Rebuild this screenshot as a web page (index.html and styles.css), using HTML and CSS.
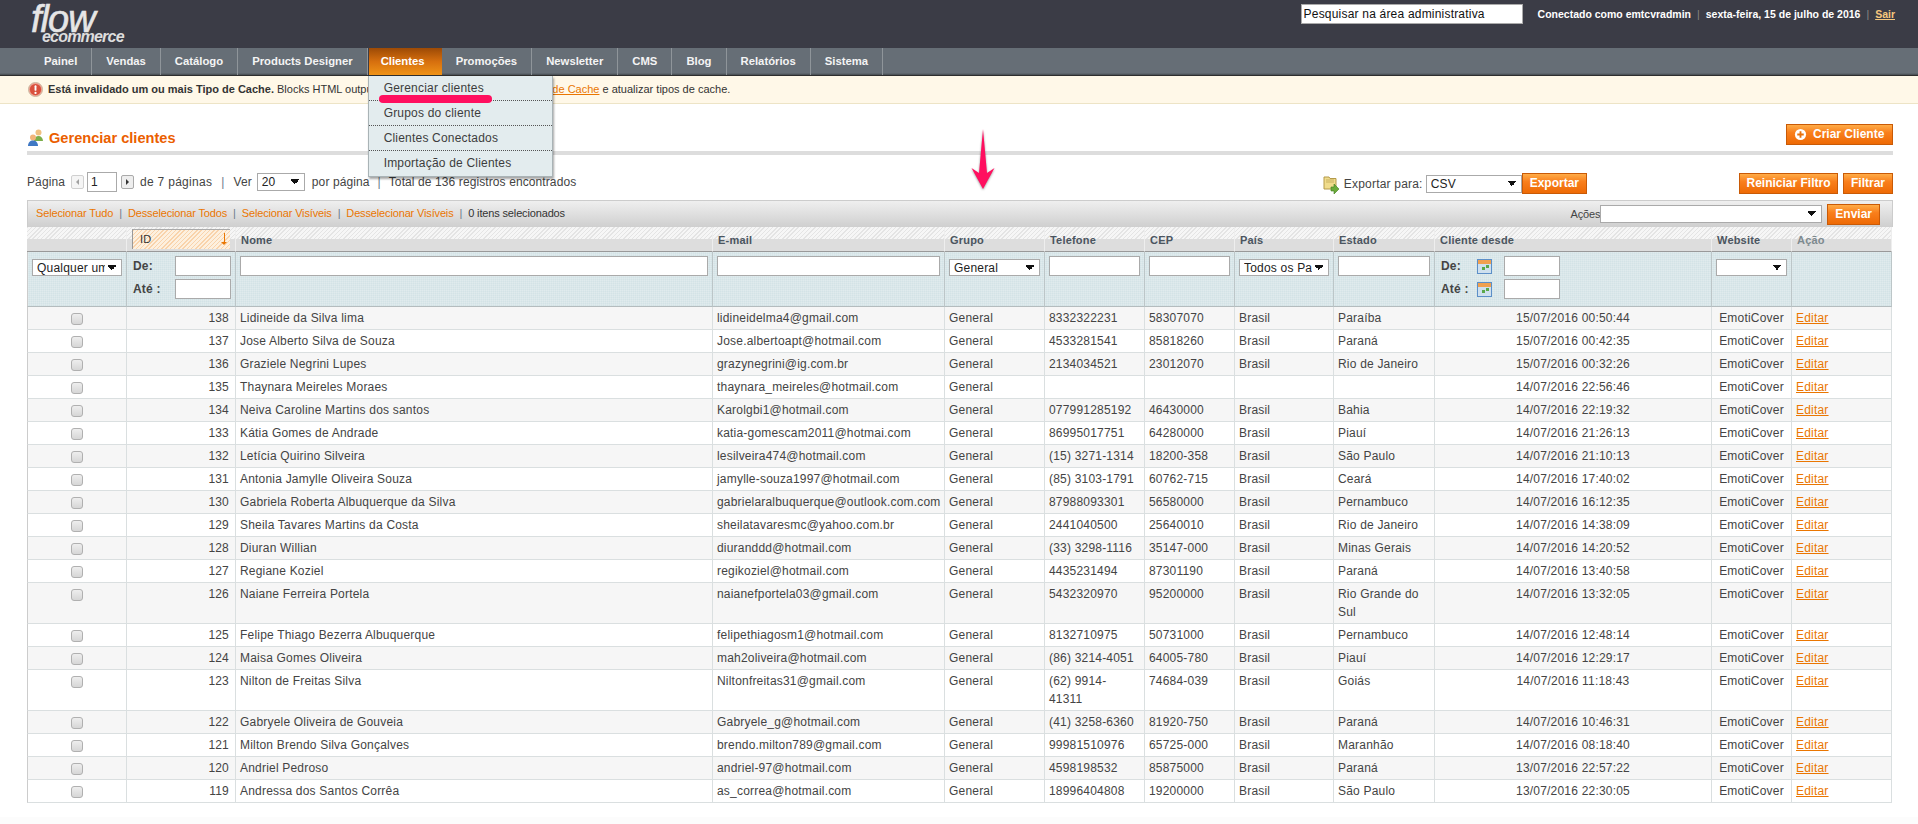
FILE: index.html
```html
<!DOCTYPE html>
<html lang="pt-BR">
<head>
<meta charset="utf-8">
<title>Gerenciar clientes</title>
<link rel="stylesheet" href="styles.css">
</head>
<body>
<header class="top">
  <div class="logo"><span class="logo-flow">flow</span><span class="logo-sub">ecommerce</span></div>
  <div class="top-right">
    <input class="search" type="text" value="Pesquisar na área administrativa">
    <div class="user"><b>Conectado como emtcvradmin</b><span class="sep">|</span><b>sexta-feira, 15 de julho de 2016</b><span class="sep">|</span><a href="#">Sair</a></div>
  </div>
</header>
<nav class="nav">
  <a class="nav-item" href="#">Painel</a>
  <a class="nav-item" href="#">Vendas</a>
  <a class="nav-item" href="#">Catálogo</a>
  <a class="nav-item" href="#">Products Designer</a>
  <div class="nav-wrap">
    <a class="nav-item active" href="#">Clientes</a>
    <div class="menu">
      <a href="#">Gerenciar clientes</a>
      <a href="#">Grupos do cliente</a>
      <a href="#">Clientes Conectados</a>
      <a href="#">Importação de Clientes</a>
    </div>
    <span class="mark-line"></span>
  </div>
  <a class="nav-item" href="#">Promoções</a>
  <a class="nav-item" href="#">Newsletter</a>
  <a class="nav-item" href="#">CMS</a>
  <a class="nav-item" href="#">Blog</a>
  <a class="nav-item" href="#">Relatórios</a>
  <a class="nav-item" href="#">Sistema</a>
</nav>
<div class="notice">
  <svg class="notice-icon" viewBox="0 0 16 16"><circle cx="8" cy="8" r="7.5" fill="#f0a090" stroke="#c9b9a0"/><circle cx="8" cy="8" r="6" fill="#d9503c"/><rect x="7" y="3.400" width="2" height="6" rx="1" fill="#fff"/><circle cx="8" cy="11.600" r="1.200" fill="#fff"/></svg>
  <p><b>Está invalidado um ou mais Tipo de Cache.</b> Blocks HTML output. Clique aqui para o <a href="#">Gerenciamento de Cache</a> e atualizar tipos de cache.</p>
</div>
<svg class="mark-arrow" viewBox="0 0 24 62"><path d="M12 0 L16 44 L23.500 39 L12 60 L.5 39 L8 44 Z" fill="#ff0f5f"/></svg>
<main class="content">
  <div class="head">
    <h1><svg class="title-icon" viewBox="0 0 18 18"><circle cx="11.500" cy="3.600" r="3" fill="#f0c080"/><path d="M7 12c0-3 2-5 4.500-5s4.500 2 4.500 5z" fill="#7cae4a"/><circle cx="6" cy="8.500" r="3" fill="#f2b47a"/><path d="M1 17c0-3.500 2.200-5.500 5-5.500s5 2 5 5.500z" fill="#3f78c4"/></svg>Gerenciar clientes</h1>
    <button class="btn btn-add" type="button"><svg class="plus" viewBox="0 0 14 14"><circle cx="7" cy="7" r="6" fill="#fff"/><path d="M6 3.500h2V6h2.500v2H8v2.500H6V8H3.500V6H6z" fill="#e8710c"/></svg>Criar Cliente</button>
  </div>
  <div class="pager-row">
    <div class="pager">
      <span>Página</span>
      <span class="arrow arrow-off"><i class="tri tri-l"></i></span>
      <input class="page-input" type="text" value="1">
      <span class="arrow arrow-next"><i class="tri tri-r"></i></span>
      <span class="pg-of">de 7 páginas</span><span class="bar">|</span><span>Ver</span>
      <select class="sel sel-page"><option>20</option></select>
      <span>por página</span><span class="bar">|</span><span>Total de 136 registros encontrados</span>
    </div>
    <div class="exports">
      <svg class="export-icon" viewBox="0 0 16 20"><path d="M1 3h5l1 1.500h6V15H1z" fill="#f0dc8c" stroke="#b49a4a"/><path d="M3 6h8M3 8h8" stroke="#c8b060"/><path d="M8 13h3v-3l5 5-5 5v-3H8z" fill="#6bab3a" stroke="#3f7d1e" stroke-width=".6"/></svg>
      <span class="export-label">Exportar para:</span>
      <select class="sel sel-export"><option>CSV</option></select>
      <button class="btn" type="button">Exportar</button>
      <button class="btn btn-reset" type="button">Reiniciar Filtro</button>
      <button class="btn" type="button">Filtrar</button>
    </div>
  </div>
  <div class="mass">
    <div class="mass-links">
      <a href="#">Selecionar Tudo</a><span class="bar">|</span><a href="#">Desselecionar Todos</a><span class="bar">|</span><a href="#">Selecionar Visíveis</a><span class="bar">|</span><a href="#">Desselecionar Visíveis</a><span class="bar">|</span><b>0 itens selecionados</b>
    </div>
    <div class="mass-actions">
      <span>Ações</span>
      <select class="sel sel-mass"><option></option></select>
      <button class="btn" type="button">Enviar</button>
    </div>
  </div>
  <table class="grid">
    <colgroup>
      <col class="c1"><col class="c2"><col class="c3"><col class="c4"><col class="c5"><col class="c6"><col class="c7"><col class="c8"><col class="c9"><col class="c10"><col class="c11"><col class="c12">
    </colgroup>
    <thead>
      <tr class="headings">
        <th></th><th class="sorted"><span class="sort-box">ID<i class="sort-arrow"></i></span></th><th>Nome</th><th>E-mail</th><th>Grupo</th><th>Telefone</th><th>CEP</th><th>País</th><th>Estado</th><th>Cliente desde</th><th>Website</th><th class="muted">Ação</th>
      </tr>
      <tr class="filter">
        <th><select class="sel fill"><option>Qualquer um</option></select></th>
        <th class="range"><div class="range-row"><label>De:</label><input class="small" type="text"></div><div class="range-row"><label>Até :</label><input class="small" type="text"></div></th>
        <th><input class="fill" type="text"></th>
        <th><input class="fill" type="text"></th>
        <th><select class="sel fill"><option>General</option></select></th>
        <th><input class="fill" type="text"></th>
        <th><input class="fill" type="text"></th>
        <th><select class="sel fill"><option>Todos os Países</option></select></th>
        <th><input class="fill" type="text"></th>
        <th class="range">
          <div class="range-row date"><label>De:</label><svg class="cal" viewBox="0 0 15 15"><rect x=".5" y=".5" width="14" height="14" fill="#cfe0ee" stroke="#5c8fc8"/><rect x="1" y="1" width="13" height="4" fill="#f0a050"/><rect x="5" y="8" width="3" height="3" fill="#5aa84a"/><rect x="9" y="6" width="3" height="3" fill="#5aa84a"/></svg><input class="small" type="text"></div>
          <div class="range-row date"><label>Até :</label><svg class="cal" viewBox="0 0 15 15"><rect x=".5" y=".5" width="14" height="14" fill="#cfe0ee" stroke="#5c8fc8"/><rect x="1" y="1" width="13" height="4" fill="#f0a050"/><rect x="5" y="8" width="3" height="3" fill="#5aa84a"/><rect x="9" y="6" width="3" height="3" fill="#5aa84a"/></svg><input class="small" type="text"></div>
        </th>
        <th><select class="sel fill"><option></option></select></th>
        <th></th>
      </tr>
    </thead>
    <tbody>
      <tr><td class="chk"><input type="checkbox"></td><td class="num">138</td><td>Lidineide da Silva lima</td><td>lidineidelma4@gmail.com</td><td>General</td><td>8332322231</td><td>58307070</td><td>Brasil</td><td>Paraíba</td><td class="ctr">15/07/2016 00:50:44</td><td class="ctr">EmotiCover</td><td><a href="#">Editar</a></td></tr>
      <tr><td class="chk"><input type="checkbox"></td><td class="num">137</td><td>Jose Alberto Silva de Souza</td><td>Jose.albertoapt@hotmail.com</td><td>General</td><td>4533281541</td><td>85818260</td><td>Brasil</td><td>Paraná</td><td class="ctr">15/07/2016 00:42:35</td><td class="ctr">EmotiCover</td><td><a href="#">Editar</a></td></tr>
      <tr><td class="chk"><input type="checkbox"></td><td class="num">136</td><td>Graziele Negrini Lupes</td><td>grazynegrini@ig.com.br</td><td>General</td><td>2134034521</td><td>23012070</td><td>Brasil</td><td>Rio de Janeiro</td><td class="ctr">15/07/2016 00:32:26</td><td class="ctr">EmotiCover</td><td><a href="#">Editar</a></td></tr>
      <tr><td class="chk"><input type="checkbox"></td><td class="num">135</td><td>Thaynara Meireles Moraes</td><td>thaynara_meireles@hotmail.com</td><td>General</td><td></td><td></td><td></td><td></td><td class="ctr">14/07/2016 22:56:46</td><td class="ctr">EmotiCover</td><td><a href="#">Editar</a></td></tr>
      <tr><td class="chk"><input type="checkbox"></td><td class="num">134</td><td>Neiva Caroline Martins dos santos</td><td>Karolgbi1@hotmail.com</td><td>General</td><td>077991285192</td><td>46430000</td><td>Brasil</td><td>Bahia</td><td class="ctr">14/07/2016 22:19:32</td><td class="ctr">EmotiCover</td><td><a href="#">Editar</a></td></tr>
      <tr><td class="chk"><input type="checkbox"></td><td class="num">133</td><td>Kátia Gomes de Andrade</td><td>katia-gomescam2011@hotmai.com</td><td>General</td><td>86995017751</td><td>64280000</td><td>Brasil</td><td>Piauí</td><td class="ctr">14/07/2016 21:26:13</td><td class="ctr">EmotiCover</td><td><a href="#">Editar</a></td></tr>
      <tr><td class="chk"><input type="checkbox"></td><td class="num">132</td><td>Letícia Quirino Silveira</td><td>lesilveira474@hotmail.com</td><td>General</td><td>(15) 3271-1314</td><td>18200-358</td><td>Brasil</td><td>São Paulo</td><td class="ctr">14/07/2016 21:10:13</td><td class="ctr">EmotiCover</td><td><a href="#">Editar</a></td></tr>
      <tr><td class="chk"><input type="checkbox"></td><td class="num">131</td><td>Antonia Jamylle Oliveira Souza</td><td>jamylle-souza1997@hotmail.com</td><td>General</td><td>(85) 3103-1791</td><td>60762-715</td><td>Brasil</td><td>Ceará</td><td class="ctr">14/07/2016 17:40:02</td><td class="ctr">EmotiCover</td><td><a href="#">Editar</a></td></tr>
      <tr><td class="chk"><input type="checkbox"></td><td class="num">130</td><td>Gabriela Roberta Albuquerque da Silva</td><td>gabrielaralbuquerque@outlook.com.com</td><td>General</td><td>87988093301</td><td>56580000</td><td>Brasil</td><td>Pernambuco</td><td class="ctr">14/07/2016 16:12:35</td><td class="ctr">EmotiCover</td><td><a href="#">Editar</a></td></tr>
      <tr><td class="chk"><input type="checkbox"></td><td class="num">129</td><td>Sheila Tavares Martins da Costa</td><td>sheilatavaresmc@yahoo.com.br</td><td>General</td><td>2441040500</td><td>25640010</td><td>Brasil</td><td>Rio de Janeiro</td><td class="ctr">14/07/2016 14:38:09</td><td class="ctr">EmotiCover</td><td><a href="#">Editar</a></td></tr>
      <tr><td class="chk"><input type="checkbox"></td><td class="num">128</td><td>Diuran Willian</td><td>diuranddd@hotmail.com</td><td>General</td><td>(33) 3298-1116</td><td>35147-000</td><td>Brasil</td><td>Minas Gerais</td><td class="ctr">14/07/2016 14:20:52</td><td class="ctr">EmotiCover</td><td><a href="#">Editar</a></td></tr>
      <tr><td class="chk"><input type="checkbox"></td><td class="num">127</td><td>Regiane Koziel</td><td>regikoziel@hotmail.com</td><td>General</td><td>4435231494</td><td>87301190</td><td>Brasil</td><td>Paraná</td><td class="ctr">14/07/2016 13:40:58</td><td class="ctr">EmotiCover</td><td><a href="#">Editar</a></td></tr>
      <tr><td class="chk"><input type="checkbox"></td><td class="num">126</td><td>Naiane Ferreira Portela</td><td>naianefportela03@gmail.com</td><td>General</td><td>5432320970</td><td>95200000</td><td>Brasil</td><td>Rio Grande do Sul</td><td class="ctr">14/07/2016 13:32:05</td><td class="ctr">EmotiCover</td><td><a href="#">Editar</a></td></tr>
      <tr><td class="chk"><input type="checkbox"></td><td class="num">125</td><td>Felipe Thiago Bezerra Albuquerque</td><td>felipethiagosm1@hotmail.com</td><td>General</td><td>8132710975</td><td>50731000</td><td>Brasil</td><td>Pernambuco</td><td class="ctr">14/07/2016 12:48:14</td><td class="ctr">EmotiCover</td><td><a href="#">Editar</a></td></tr>
      <tr><td class="chk"><input type="checkbox"></td><td class="num">124</td><td>Maisa Gomes Oliveira</td><td>mah2oliveira@hotmail.com</td><td>General</td><td>(86) 3214-4051</td><td>64005-780</td><td>Brasil</td><td>Piauí</td><td class="ctr">14/07/2016 12:29:17</td><td class="ctr">EmotiCover</td><td><a href="#">Editar</a></td></tr>
      <tr><td class="chk"><input type="checkbox"></td><td class="num">123</td><td>Nilton de Freitas Silva</td><td>Niltonfreitas31@gmail.com</td><td>General</td><td>(62) 9914-41311</td><td>74684-039</td><td>Brasil</td><td>Goiás</td><td class="ctr">14/07/2016 11:18:43</td><td class="ctr">EmotiCover</td><td><a href="#">Editar</a></td></tr>
      <tr><td class="chk"><input type="checkbox"></td><td class="num">122</td><td>Gabryele Oliveira de Gouveia</td><td>Gabryele_g@hotmail.com</td><td>General</td><td>(41) 3258-6360</td><td>81920-750</td><td>Brasil</td><td>Paraná</td><td class="ctr">14/07/2016 10:46:31</td><td class="ctr">EmotiCover</td><td><a href="#">Editar</a></td></tr>
      <tr><td class="chk"><input type="checkbox"></td><td class="num">121</td><td>Milton Brendo Silva Gonçalves</td><td>brendo.milton789@gmail.com</td><td>General</td><td>99981510976</td><td>65725-000</td><td>Brasil</td><td>Maranhão</td><td class="ctr">14/07/2016 08:18:40</td><td class="ctr">EmotiCover</td><td><a href="#">Editar</a></td></tr>
      <tr><td class="chk"><input type="checkbox"></td><td class="num">120</td><td>Andriel Pedroso</td><td>andriel-97@hotmail.com</td><td>General</td><td>4598198532</td><td>85875000</td><td>Brasil</td><td>Paraná</td><td class="ctr">13/07/2016 22:57:22</td><td class="ctr">EmotiCover</td><td><a href="#">Editar</a></td></tr>
      <tr><td class="chk"><input type="checkbox"></td><td class="num">119</td><td>Andressa dos Santos Corrêa</td><td>as_correa@hotmail.com</td><td>General</td><td>18996404808</td><td>19200000</td><td>Brasil</td><td>São Paulo</td><td class="ctr">13/07/2016 22:30:05</td><td class="ctr">EmotiCover</td><td><a href="#">Editar</a></td></tr>
    </tbody>
  </table>
</main>
<footer class="foot"></footer>
</body>
</html>
```

FILE: styles.css
```css
* { box-sizing: border-box; }
html, body { margin: 0; padding: 0; }
body { height: 824px; overflow: hidden; background: #fff; color: #444; font: 12px/18px "Liberation Sans", Arial, sans-serif; position: relative; letter-spacing: .2px; }
a { color: #ea7601; }
input, select, button { font: inherit; letter-spacing: inherit; margin: 0; }

/* header */
.top { height: 48px; background: #3b3c46; display: flex; justify-content: space-between; padding: 0 23px 0 31px; }
.logo { display: flex; flex-direction: column; color: #e6e6e6; font-style: italic; }
.logo-flow { font-size: 38px; line-height: 38px; height: 32px; letter-spacing: -1px; -webkit-text-stroke: .6px #e6e6e6; }
.logo-sub { font-size: 16px; line-height: 10px; font-weight: bold; margin: 0 0 0 11px; letter-spacing: -.8px; color: #ddd; }
.top-right { display: flex; align-items: flex-start; padding-top: 4px; }
.search { width: 222px; height: 20px; border: 1px solid #aaa; padding: 0 2px; background: #fff; color: #111; }
.user { color: #fff; font-size: 10.500px; line-height: 20px; margin: 0 0 0 15px; white-space: nowrap; letter-spacing: 0; }
.user a { color: #f5c77e; font-weight: bold; }
.user .sep { color: #888; margin: 0 6px; }

/* nav */
.nav { height: 28px; padding: 0 0 0 30px; background: linear-gradient(#666e76 0, #666e76 25px, #444a4f 27px); border-bottom: 1px solid #2e2e2e; display: flex; }
.nav-wrap { position: relative; display: flex; }
.nav-item { display: block; height: 27px; padding: 0 14px; line-height: 26px; font-size: 11.300px; font-weight: bold; color: #f4f4f4; text-decoration: none; border-right: 1px solid #8f959a; letter-spacing: 0; }
.nav-item.active { background: linear-gradient(#9c4a06, #d66f0e 50%, #ef9317); border-right: 0; border-left: 1px solid #3b3c46; padding: 0 0 0 12px; width: 74px; color: #fff; }
.menu { position: absolute; left: 0; top: 28px; width: 185px; z-index: 5; background: #e3ecee; border: 1px solid #a9b3b6; border-top: 0; box-shadow: 1px 2px 2px rgba(0,0,0,.35); }
.menu a { display: block; height: 25px; line-height: 24px; padding: 0 0 0 15px; color: #3d3d3d; text-decoration: none; border-bottom: 1px dotted #555; }
.menu a:last-child { border-bottom: 0; }
.mark-line { position: absolute; left: 11px; top: 47px; width: 113px; height: 8px; border-radius: 4px; background: #ff0f5f; z-index: 6; }
.mark-arrow { position: absolute; left: 971px; top: 129px; width: 24px; height: 62px; z-index: 6; filter: drop-shadow(0 1px 1px rgba(0,0,0,.4)); }

/* notice */
.notice { height: 28px; background: #fff8e8; border-bottom: 1px solid #ede4c6; display: flex; align-items: center; padding: 0 0 1px 28px; font-size: 11px; color: #333; letter-spacing: 0; }
.notice p { margin: 0; }
.notice-icon { width: 15px; height: 15px; margin-right: 5px; }

/* content */
.content { padding: 20px 25px 0 27px; }
.head { display: flex; justify-content: space-between; align-items: flex-start; height: 31px; border-bottom: 4px solid #ddd; }
h1 { margin: 3px 0 0; font-size: 14.600px; line-height: 22px; color: #eb5e00; display: flex; align-items: center; letter-spacing: 0; }
.title-icon { width: 18px; height: 18px; margin-right: 4px; }
.btn { height: 21px; padding: 0 7px; border: 1px solid #c95a06; background: linear-gradient(#ffac47, #f97f1c 40%, #ee6a05); color: #fff; font-weight: bold; font-size: 12px; line-height: 17px; letter-spacing: 0; }
.btn-add { width: 107px; display: flex; align-items: center; padding: 0 0 0 7px; }
.plus { width: 13px; height: 13px; margin-right: 6px; }

.pager-row { display: flex; justify-content: space-between; height: 21px; margin-top: 18px; }
.pager, .exports { display: flex; align-items: center; white-space: nowrap; }
.pager { margin-top: -3px; letter-spacing: .1px; }
.bar { color: #6a7a8a; margin: 0 8px; }
.pager .arrow { width: 13px; height: 14px; margin: 0 3px 0 6px; border: 1px solid #aaa; border-radius: 2px; background: #eee; display: flex; align-items: center; justify-content: center; }
.pager .arrow-off { opacity: .55; }
.pager .arrow-next { margin-left: 4px; }
.pg-of { margin-left: 3px; letter-spacing: .3px; }
.pg-of + .bar { margin: 0 9px; }
.tri { display: block; width: 0; height: 0; border: 3px solid transparent; }
.tri-l { border-right-color: #555; border-left: 0; }
.tri-r { border-left-color: #333; border-right: 0; }
.page-input { width: 30px; height: 20px; border: 1px solid #aaa; padding: 0 3px; color: #222; }
.sel { appearance: none; -webkit-appearance: none; height: 18px; border: 1px solid #aaa; border-radius: 0; padding: 0 16px 0 4px; color: #222; line-height: 16px;
  background-color: #fff;
  background-image: linear-gradient(45deg, transparent 50%, #111 50%), linear-gradient(-45deg, transparent 50%, #111 50%);
  background-size: 4px 6px, 4px 6px; background-repeat: no-repeat;
  background-position: right 9px top 5px, right 5px top 5px; }
.sel-page { width: 48px; margin: 0 7px 0 5px; }
.sel-export { width: 96px; margin: 0 0 0 3px; }
.exports .sel-export + .btn { margin-right: 152px; }
.export-icon { width: 16px; height: 20px; margin-right: 5px; }
.btn-reset { width: 99px; margin-right: 5px; padding: 0; }
.exports .btn { min-width: 50px; }

.mass { height: 27px; background: linear-gradient(#efefef, #cfcfcf); border: 1px solid #ccc; border-bottom: 0; display: flex; justify-content: space-between; align-items: center; padding: 0 12px 0 8px; margin-top: 6px; font-size: 11px; letter-spacing: -.15px; }
.mass a { text-decoration: none; }
.mass-links { margin-top: -2px; }
.mass .bar { margin: 0 6px; }
.mass b { font-weight: normal; color: #333; }
.mass-actions { display: flex; align-items: center; }
.sel-mass { width: 222px; margin: 0 5px 0 0; }

.grid { width: 1865px; table-layout: fixed; border-collapse: separate; border-spacing: 0; }
.c1 { width: 100px; } .c2 { width: 109px; } .c3 { width: 477px; } .c4 { width: 232px; }
.c5 { width: 100px; } .c6 { width: 100px; } .c7 { width: 90px; } .c8 { width: 99px; }
.c9 { width: 101px; } .c10 { width: 277px; } .c11 { width: 80px; } .c12 { width: 100px; }

.grid th { text-align: left; font-weight: bold; font-size: 11px; vertical-align: top; }
.headings th { height: 25px; padding: 3px 4px 0 5px; line-height: 20px; color: #4b5560; border-right: 1px solid #eee; border-bottom: 1px solid #999;
  background: linear-gradient(transparent 12px, #ddd 12px), repeating-linear-gradient(135deg, #e4e4e4 0 1px, #f6f6f6 1px 3px); }
.headings th.muted { color: #7d8a8f; font-weight: bold; }
.headings th.sorted { padding: 2px 5px 1px 5px; }
.sort-box { display: flex; justify-content: space-between; height: 20px; padding: 0 2px 0 7px; border-left: 1px solid #999; border-top: 1px solid #aaa; line-height: 18px; background: repeating-linear-gradient(135deg, #f9d3ab 0 1px, #fdf0df 1px 3px); font-weight: normal; color: #333; }
.sort-arrow { position: relative; display: block; width: 7px; height: 12px; margin-top: 3px; background: linear-gradient(#ea7601, #ea7601) center top / 1px 9px no-repeat; }
.sort-arrow::after { content: ""; position: absolute; left: 0; bottom: 0; border: 3.500px solid transparent; border-bottom: 0; border-top-color: #ea7601; }

.filter th { height: 55px; padding: 4px 4px 0; border-right: 1px solid #bcc6c8; border-bottom: 1px solid #b4bcbe;
  background: #d3e3e6; background-image: linear-gradient(90deg, rgba(255,255,255,.15) 1px, transparent 1px), linear-gradient(rgba(255,255,255,.15) 1px, transparent 1px); background-size: 2px 2px; }
.filter th:first-child, .grid td:first-child { border-left: 1px solid #ccc; }
.filter input { height: 20px; border: 1px solid #aaa; padding: 0 2px; background: #fff; display: block; }
.filter .fill { width: 100%; }
.filter .sel { margin-top: 3px; height: 17px; font-weight: normal; font-size: 12px; }
.filter .range { padding-left: 6px; }
.range-row { display: flex; align-items: center; margin-bottom: 3px; font-size: 12px; color: #444; }
.range-row label { width: 42px; }
.range-row .small { width: 56px; }
.range-row.date label { width: 36px; }
.cal { width: 15px; height: 15px; margin-right: 12px; }

.grid td { height: 23px; padding: 2px 5px 2px 4px; line-height: 18px; vertical-align: top; border-right: 1px solid #dadfe0; border-bottom: 1px solid #dadfe0; color: #444; }
.grid tbody tr:nth-child(odd) td { background: #f6f6f6; }
.grid td.num { text-align: right; padding-right: 6px; }
.grid td.ctr { text-align: center; padding-right: 4px; }
.grid td.chk { text-align: center; padding: 6px 0 0; }
.chk input { appearance: none; -webkit-appearance: none; display: block; width: 12px; height: 12px; margin: 0 auto; border: 1px solid #b0b0b0; border-radius: 3px; background: linear-gradient(#eee, #d6d6d6); }

.foot { position: absolute; left: 0; right: 0; bottom: 0; height: 7px; background: #fcfcfc; }
```
